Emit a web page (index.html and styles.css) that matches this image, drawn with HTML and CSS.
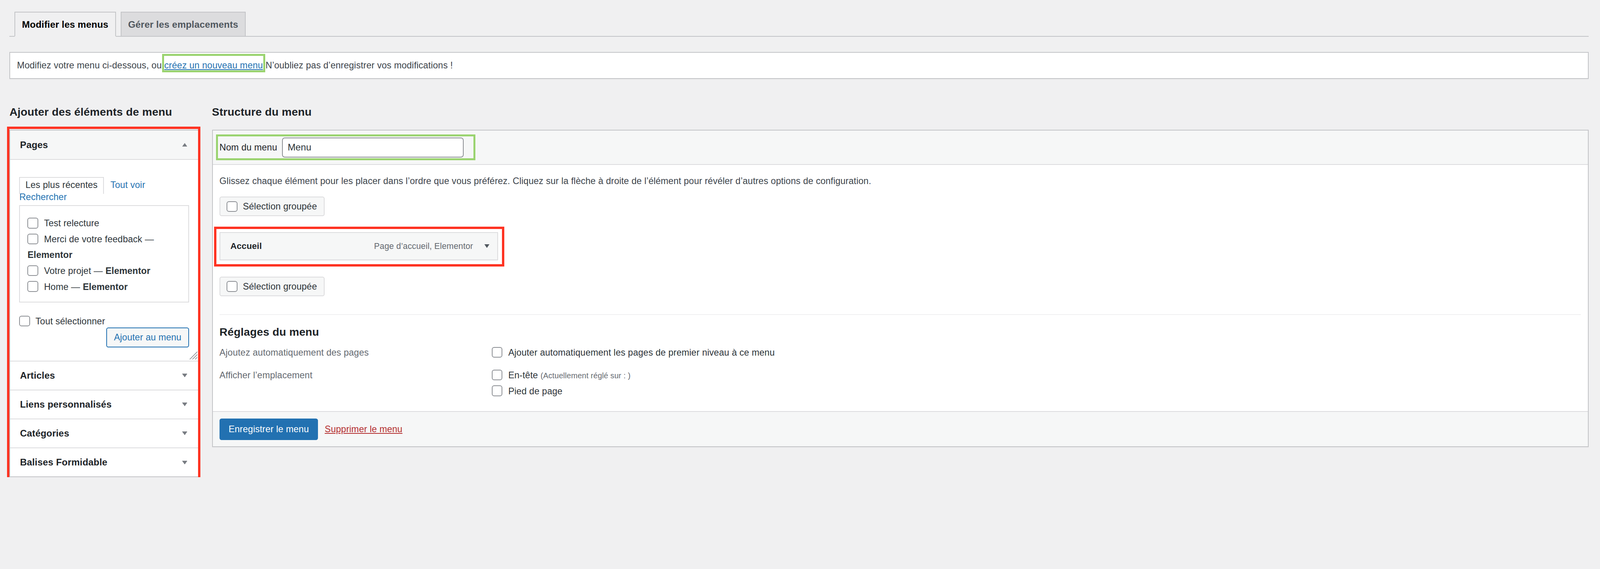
FILE: index.html
```html
<!DOCTYPE html>
<html lang="fr">
<head>
    <meta charset="UTF-8">
    <meta name="viewport" content="width=device-width, initial-scale=1.0">
    <title>Menus</title>
    <link rel="stylesheet" href="styles.css">
</head>
<body>
    <div class="wrap">
        <nav class="nav-tabs">
            <a class="nav-tab active" href="#">Modifier les menus</a>
            <a class="nav-tab" href="#">Gérer les emplacements</a>
        </nav>

        <div class="notice">
            <p>Modifiez votre menu ci-dessous, ou <a href="#" class="mark-green new-menu-link">créez un nouveau menu</a> N’oubliez pas d’enregistrer vos modifications !</p>
        </div>

        <div class="columns">
            <!-- left: items to add -->
            <div class="col-left">
                <h2>Ajouter des éléments de menu</h2>
                <div class="accordion mark-red">
                    <div class="acc-section open">
                        <h3 class="acc-title">Pages
                            <svg class="acc-arrow" viewBox="0 0 16 11"><path d="M8 0 16 11H0z"/></svg>
                        </h3>
                        <div class="acc-content">
                            <ul class="panel-tabs">
                                <li class="tab-active">Les plus récentes</li>
                                <li><a href="#">Tout voir</a></li>
                                <li><a href="#">Rechercher</a></li>
                            </ul>
                            <ul class="checklist">
                                <li><label><input type="checkbox">Test relecture</label></li>
                                <li><label><input type="checkbox">Merci de votre feedback — <b>Elementor</b></label></li>
                                <li><label><input type="checkbox">Votre projet — <b>Elementor</b></label></li>
                                <li><label><input type="checkbox">Home — <b>Elementor</b></label></li>
                            </ul>
                            <div class="select-all">
                                <label><input type="checkbox">Tout sélectionner</label>
                            </div>
                            <div class="add-row">
                                <button class="button-secondary">Ajouter au menu</button>
                            </div>
                            <svg class="resize-grip" viewBox="0 0 25 25">
                                <path d="M25 2 2 25M25 10 10 25M25 18 18 25" stroke="#8c8f94" stroke-width="2" fill="none"/>
                            </svg>
                        </div>
                    </div>
                    <div class="acc-section">
                        <h3 class="acc-title">Articles
                            <svg class="acc-arrow" viewBox="0 0 16 11"><path d="M0 0H16L8 11z"/></svg>
                        </h3>
                    </div>
                    <div class="acc-section">
                        <h3 class="acc-title">Liens personnalisés
                            <svg class="acc-arrow" viewBox="0 0 16 11"><path d="M0 0H16L8 11z"/></svg>
                        </h3>
                    </div>
                    <div class="acc-section">
                        <h3 class="acc-title">Catégories
                            <svg class="acc-arrow" viewBox="0 0 16 11"><path d="M0 0H16L8 11z"/></svg>
                        </h3>
                    </div>
                    <div class="acc-section">
                        <h3 class="acc-title">Balises Formidable
                            <svg class="acc-arrow" viewBox="0 0 16 11"><path d="M0 0H16L8 11z"/></svg>
                        </h3>
                    </div>
                </div>
            </div>

            <!-- right: menu structure -->
            <div class="col-right">
                <h2>Structure du menu</h2>
                <div class="menu-edit">
                    <div class="menu-header">
                        <div class="name-field mark-green">
                            <label for="menu-name">Nom du menu</label>
                            <input type="text" id="menu-name" value="Menu">
                        </div>
                    </div>

                    <div class="menu-body">
                        <p class="instructions">Glissez chaque élément pour les placer dans l’ordre que vous préférez. Cliquez sur la flèche à droite de l’élément pour révéler d’autres options de configuration.</p>

                        <div class="bulk-row">
                            <label class="bulk-select"><input type="checkbox">Sélection groupée</label>
                        </div>

                        <div class="menu-item mark-red">
                            <span class="item-title">Accueil</span>
                            <span class="item-controls">
                                Page d’accueil, Elementor
                                <svg class="item-arrow" viewBox="0 0 15 11"><path d="M0 0H15L7.5 11z"/></svg>
                            </span>
                        </div>

                        <div class="bulk-row second">
                            <label class="bulk-select"><input type="checkbox">Sélection groupée</label>
                        </div>

                        <div class="divider"></div>

                        <h3 class="settings-title">Réglages du menu</h3>
                        <dl class="settings">
                            <dt>Ajoutez automatiquement des pages</dt>
                            <dd><label><input type="checkbox">Ajouter automatiquement les pages de premier niveau à ce menu</label></dd>
                            <dt>Afficher l’emplacement</dt>
                            <dd>
                                <label><input type="checkbox">En-tête <span class="note">(Actuellement réglé sur : )</span></label><br>
                                <label><input type="checkbox">Pied de page</label>
                            </dd>
                        </dl>
                    </div>

                    <div class="menu-footer">
                        <button class="button-primary">Enregistrer le menu</button>
                        <a href="#" class="delete-link">Supprimer le menu</a>
                    </div>
                </div>
            </div>
        </div>
    </div>
</body>
</html>
```

FILE: styles.css
```css
/* 1rem = 10px on a 4748px wide screen, everything scales with the window */
html {
    font-size: calc(100vw / 474.8);
}

* {
    box-sizing: border-box;
}

body {
    margin: 0;
    background: #f0f0f1;
    color: #3c434a;
    font-family: "Liberation Sans", Arial, sans-serif;
    font-size: 2.7rem;
    line-height: 1.4;
    letter-spacing: 0.015rem;
}

a {
    color: #2271b1;
}

.wrap {
    padding: 3.5rem 3.4rem 0 2.8rem;
}

/* top tabs */
.nav-tabs {
    display: flex;
    align-items: flex-end;
    padding-left: 1.5rem;
    border-bottom: 2px solid #c3c4c7;
}

.nav-tab {
    display: block;
    margin: 0 1.4rem -2px 0;
    padding: 1rem 2rem 0.9rem;
    border: 2px solid #c3c4c7;
    background: #dcdcde;
    color: #50575e;
    font-size: 2.8rem;
    font-weight: 700;
    line-height: 5rem;
    text-decoration: none;
}

.nav-tab.active {
    background: #f0f0f1;
    border-bottom-color: #f0f0f1;
    color: #000;
}

.notice {
    margin-top: 4.5rem;
    padding: 1.9rem 2rem;
    background: #fff;
    border: 2px solid #c3c4c7;
    box-shadow: 0 1px 1px rgba(0,0,0,0.04);
}

.notice p {
    margin: 0;
    line-height: 3.8rem;
}

/* annotation frames */
.mark-green,
.mark-red {
    position: relative;
}

.mark-green::after,
.mark-red::after {
    content: "";
    position: absolute;
    pointer-events: none;
}

.mark-green::after {
    border: 0.6rem solid #9ad36f;
}

.mark-red::after {
    border: 0.7rem solid #fe3322;
}

.new-menu-link::after {
    top: -1.9rem;
    right: -0.7rem;
    bottom: -0.6rem;
    left: -0.7rem;
}

.name-field::after {
    top: -0.9rem;
    right: -3.5rem;
    bottom: -0.8rem;
    left: -1rem;
}

.menu-item::after {
    top: -1.8rem;
    right: -2rem;
    bottom: -2.1rem;
    left: -1.8rem;
}

.accordion::after {
    top: -1.2rem;
    right: -0.7rem;
    bottom: -0.9rem;
    left: -0.9rem;
}

/* columns */
.columns {
    display: flex;
    gap: 3.9rem;
    margin-top: 7.6rem;
}

.col-left {
    width: 56.2rem;
    flex-shrink: 0;
}

.col-right {
    flex: 1;
}

h2 {
    margin: 0 0 3.1rem;
    color: #1d2327;
    font-size: 3.3rem;
    font-weight: 700;
    line-height: 4.4rem;
}

/* left accordion */
.accordion {
    background: #fff;
    border: 2px solid #c3c4c7;
    box-shadow: 0 1px 1px rgba(0,0,0,0.04);
}

.acc-title {
    display: flex;
    align-items: center;
    justify-content: space-between;
    height: 8.6rem;
    margin: 0;
    padding: 0 3.2rem 0 2.9rem;
    border-top: 2px solid #dcdcde;
    color: #1d2327;
    font-size: 2.8rem;
    font-weight: 700;
}

.open .acc-title {
    background: #f6f7f7;
    border-top: none;
    border-bottom: 2px solid #dcdcde;
}

.acc-arrow {
    width: 1.6rem;
    height: 1.1rem;
    fill: #787c82;
}

.acc-content {
    position: relative;
    padding: 5.1rem 2.7rem 3.9rem;
}

.panel-tabs {
    margin: 0;
    padding: 0;
    list-style: none;
    line-height: 3.6rem;
}

.panel-tabs li {
    display: inline;
    margin-right: 1.2rem;
    white-space: nowrap;
}

.panel-tabs a {
    text-decoration: none;
}

.panel-tabs .tab-active {
    display: inline-block;
    margin-bottom: -0.8rem;
    padding: 0.4rem 1.6rem 0.8rem;
    border: 2px solid #dcdcde;
    border-bottom: 0;
    color: #2c3338;
}

.checklist {
    margin: 0.6rem 0 0;
    padding: 2.8rem 2rem 2.1rem 2.2rem;
    list-style: none;
    border: 2px solid #dcdcde;
    color: #2c3338;
}

.checklist li {
    line-height: 4.7rem;
}

input[type="checkbox"] {
    appearance: none;
    -webkit-appearance: none;
    width: 3.2rem;
    height: 3.2rem;
    margin: 0 1.7rem 0 0;
    border: 2px solid #8c8f94;
    border-radius: 0.7rem;
    background: #fff;
    vertical-align: -0.6rem;
}

.select-all {
    margin-top: 3.8rem;
    line-height: 3.6rem;
    color: #2c3338;
}

.select-all input {
    margin-right: 1.6rem;
}

.add-row {
    text-align: right;
}

.button-secondary {
    height: 5.9rem;
    padding: 0 2rem;
    border: 2px solid #2271b1;
    border-radius: 0.6rem;
    background: #f6f7f7;
    color: #2271b1;
    font-family: inherit;
    font-size: 2.7rem;
    letter-spacing: inherit;
    line-height: 5.5rem;
}

.resize-grip {
    position: absolute;
    right: 0.2rem;
    bottom: 0.3rem;
    width: 2.5rem;
    height: 2.5rem;
}

/* right: menu structure */
.menu-edit {
    background: #fff;
    border: 2px solid #c3c4c7;
    box-shadow: 0 1px 1px rgba(0,0,0,0.04);
}

.menu-header {
    display: flex;
    align-items: center;
    height: 10.2rem;
    padding: 0 2rem;
    background: #f6f7f7;
    border-bottom: 2px solid #dcdcde;
}

.name-field {
    display: flex;
    align-items: center;
    gap: 1.4rem;
    color: #1d2327;
}

.name-field input {
    width: 53.9rem;
    height: 5.9rem;
    padding: 0 1.5rem;
    border: 2px solid #8c8f94;
    border-radius: 0.8rem;
    background: #fff;
    color: #2c3338;
    font-family: inherit;
    font-size: 2.8rem;
}

.menu-body {
    padding: 2.9rem 2rem 3.6rem;
}

.instructions {
    margin: 0;
    line-height: 3.8rem;
}

.bulk-row {
    display: flex;
    margin-top: 2.7rem;
}

.bulk-row.second {
    margin-top: 4.9rem;
}

.bulk-select {
    display: flex;
    align-items: center;
    height: 5.8rem;
    padding: 0 2rem 0 1.9rem;
    border: 2px solid #dcdcde;
    border-radius: 0.6rem;
    background: #f6f7f7;
    color: #2c3338;
}

.bulk-select input {
    margin-right: 1.6rem;
}

.menu-item {
    display: flex;
    align-items: center;
    width: 82.7rem;
    height: 8.3rem;
    margin-top: 4.7rem;
    padding: 0 2.4rem 0 3rem;
    background: #f6f7f7;
    border: 2px solid #dcdcde;
    box-shadow: 0 1px 2px rgba(0,0,0,0.05);
}

.item-title {
    color: #1d2327;
    font-size: 2.6rem;
    font-weight: 700;
}

.item-controls {
    display: flex;
    align-items: center;
    gap: 3.3rem;
    margin-left: auto;
    color: #646970;
    font-size: 2.5rem;
}

.item-arrow {
    width: 1.5rem;
    height: 1.1rem;
    fill: #50575e;
}

.divider {
    margin-top: 5.4rem;
    border-top: 2px solid #f0f0f1;
}

.settings-title {
    margin: 2.8rem 0 0;
    color: #1d2327;
    font-size: 3.3rem;
    font-weight: 700;
    line-height: 4.4rem;
}

.settings {
    display: grid;
    grid-template-columns: 80.8rem 1fr;
    row-gap: 2.1rem;
    margin: 1.7rem 0 0;
    line-height: 4.6rem;
}

.settings dt {
    color: #646970;
}

.settings dd {
    margin: 0;
    color: #2c3338;
}

.note {
    color: #646970;
    font-size: 2.3rem;
}

.menu-footer {
    display: flex;
    align-items: center;
    gap: 2rem;
    padding: 1.9rem 2rem;
    background: #f6f7f7;
    border-top: 2px solid #dcdcde;
}

.button-primary {
    height: 6.4rem;
    padding: 0 2.7rem;
    border: none;
    border-radius: 0.6rem;
    background: #2271b1;
    color: #fff;
    font-family: inherit;
    font-size: 2.7rem;
    letter-spacing: inherit;
}

.delete-link {
    color: #b32d2e;
    text-decoration: underline;
}
```
